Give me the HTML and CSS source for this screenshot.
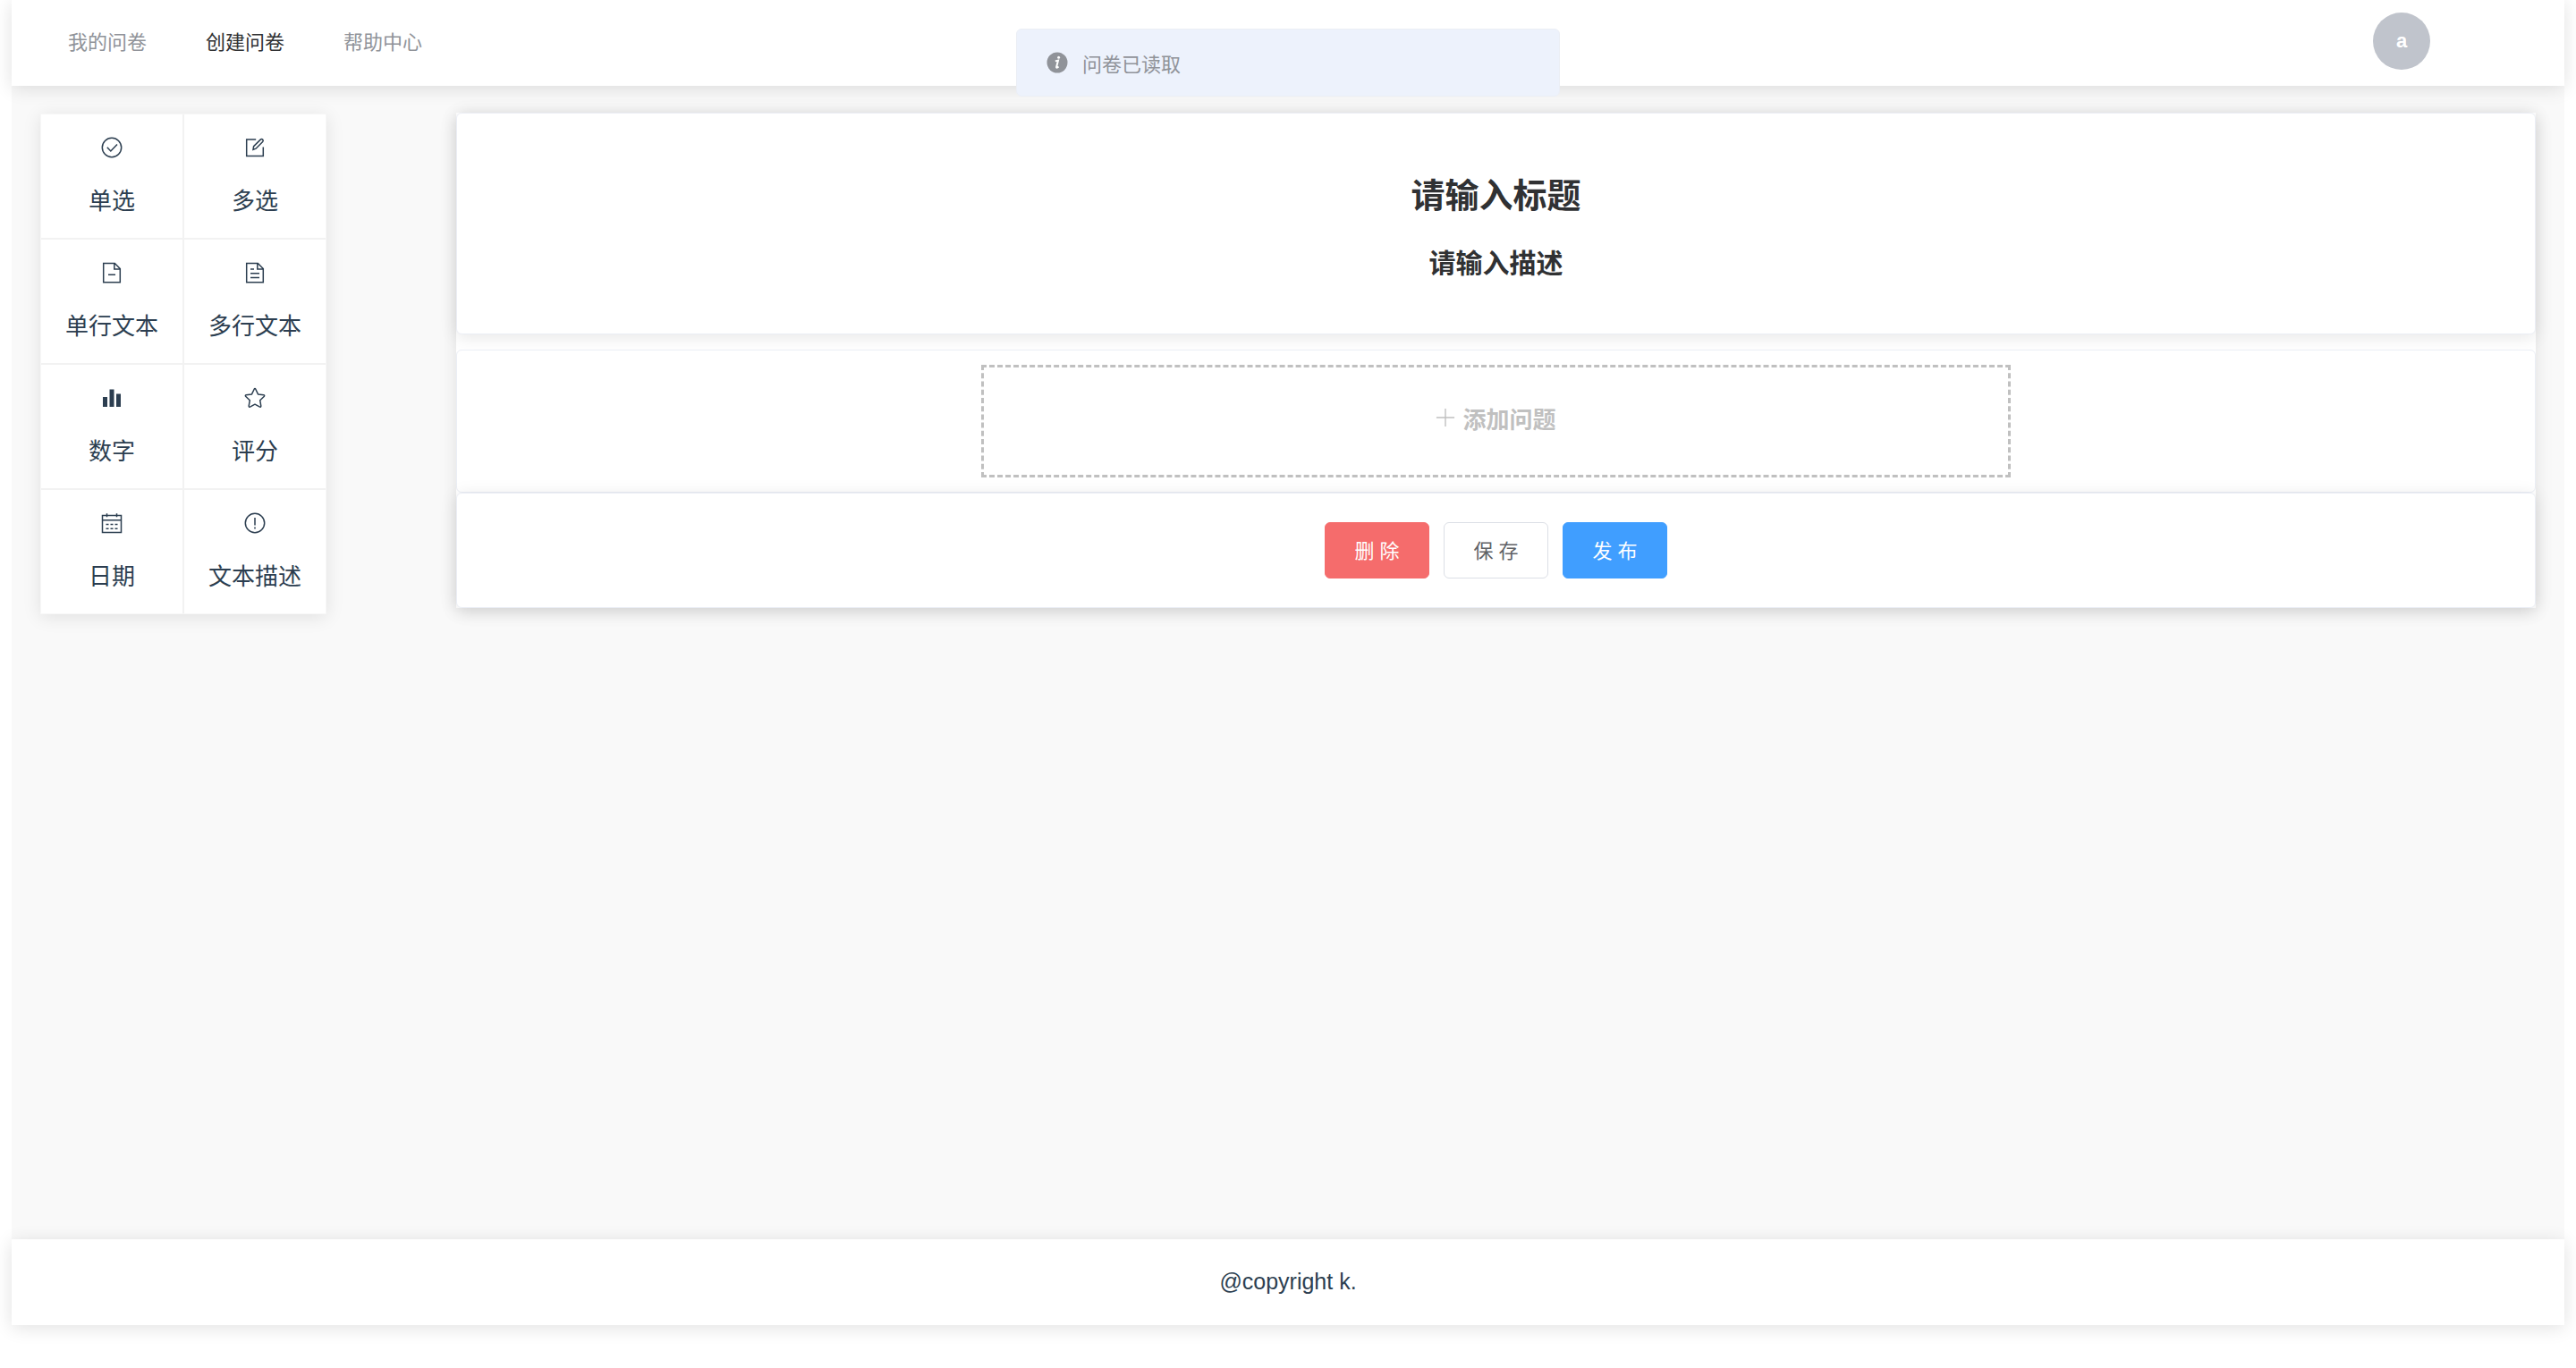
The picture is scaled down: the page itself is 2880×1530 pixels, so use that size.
FILE: index.html
```html
<!DOCTYPE html>
<html lang="zh-CN">
<head>
	<meta charset="UTF-8">
	<meta name="viewport" content="width=device-width, initial-scale=1">
	<title>创建问卷</title>
	<link rel="stylesheet" href="styles.css">
</head>
<body>
	<div class="page">
		<!--顶部导航-->
		<header class="header">
			<nav class="nav">
				<a href="#">我的问卷</a>
				<a href="#" class="active">创建问卷</a>
				<a href="#">帮助中心</a>
			</nav>
			<span class="avatar">a</span>
		</header>

		<main class="main">
			<!--题型-->
			<aside class="aside">
				<div class="types">
					<button type="button" class="type">
						<svg class="icon" viewBox="0 0 26 26"><circle cx="13" cy="13" r="10.7"/><path d="M7.8 12.8l4 4.2 7.2-7.6"/></svg>
						<span>单选</span>
					</button>
					<button type="button" class="type">
						<svg class="icon" viewBox="0 0 26 26"><path d="M14.2 4H3.7v18.6h18.6V12.5"/><path d="M11 15.3l.6-3.6 7.6-7.6q1.3-1 2.5 0 1.1 1.2 0 2.5l-7.6 7.6z"/></svg>
						<span>多选</span>
					</button>
					<button type="button" class="type">
						<svg class="icon" viewBox="0 0 26 26"><path d="M3.7 2.5h12.6l6 6v15.2H3.7zM15.8 2.5V9h6.5M9 15.2h8"/></svg>
						<span>单行文本</span>
					</button>
					<button type="button" class="type">
						<svg class="icon" viewBox="0 0 26 26"><path d="M3.7 2.5h12.6l6 6v15.2H3.7zM15.8 2.5V9h6.5M8 9h4M8 13.8h10M8 18.6h10"/></svg>
						<span>多行文本</span>
					</button>
					<button type="button" class="type">
						<svg class="icon solid" viewBox="0 0 26 26"><path d="M3 12h5v11H3zM10.5 3.5h5V23h-5zM18 8.5h5V23h-5z"/></svg>
						<span>数字</span>
					</button>
					<button type="button" class="type">
						<svg class="icon" viewBox="0 0 26 26"><path stroke-linejoin="round" d="M12.2 3.2q.8-1.2 1.6 0l2.7 5.7 6.4.9q1.2.4.5 1.4l-4.7 4.5 1.1 6.5q-.1 1.3-1.3.9L13 20.2l-5.5 2.9q-1.2.4-1.3-.9l1.1-6.5-4.7-4.5q-.7-1 .5-1.4l6.4-.9z"/></svg>
						<span>评分</span>
					</button>
					<button type="button" class="type">
						<svg class="icon" viewBox="0 0 26 26"><path d="M2.5 4.5h21v19h-21zM2.5 9.8h21M7.5 2.3v4M18.5 2.3v4"/><path stroke-dasharray="3 2" d="M6.5 14.5h13M6.5 19.2h13"/></svg>
						<span>日期</span>
					</button>
					<button type="button" class="type">
						<svg class="icon" viewBox="0 0 26 26"><circle cx="13" cy="13" r="10.7"/><path d="M13 7v8.5M13 17.5v2"/></svg>
						<span>文本描述</span>
					</button>
				</div>
			</aside>

			<!--问卷编辑-->
			<section class="editor">
				<div class="card card-title">
					<h2>请输入标题</h2>
					<h3>请输入描述</h3>
				</div>
				<div class="card card-question">
					<button type="button" class="add">
						<svg class="plus" viewBox="0 0 24 24"><path d="M12 1v22M1 12h22"/></svg>
						<span>添加问题</span>
					</button>
				</div>
				<div class="card card-action">
					<button type="button" class="btn danger">删 除</button>
					<button type="button" class="btn">保 存</button>
					<button type="button" class="btn primary">发 布</button>
				</div>
			</section>
		</main>

		<footer class="footer">@copyright k.</footer>
	</div>

	<!--消息提示-->
	<div class="message" role="alert">
		<svg class="info" viewBox="0 0 24 24"><circle cx="12" cy="12" r="11.5"/><circle class="mark" cx="13.6" cy="6.3" r="1.5"/><path class="stem" d="M9.8 10.4l3.2-.8-1.9 7.3q-.2 1.800 2.400-.4"/></svg>
		<span>问卷已读取</span>
	</div>
</body>
</html>
```

FILE: styles.css
```css
*{
	box-sizing: border-box;
}
body{
	min-height: 100vh;
	margin: 0;
	padding: 0 13px;
	background-color: #fff;
	color: #2c3e50;
	font-family: "Liberation Sans", "Noto Sans CJK SC", sans-serif;
	font-size: 26px;
}
h2,h3{
	margin: 0;
}
button{
	font-family: inherit;
	cursor: pointer;
}
.page{
	display: flex;
	flex-direction: column;
	min-height: calc(100vh - 48px);
}

/* 顶部导航 */
.header{
	position: relative;
	display: flex;
	justify-content: space-between;
	height: 96px;
	padding: 0 150px 0 30px;
	background-color: #fff;
	box-shadow: 0 3px 19px rgba(0,0,0,.12);
}
.nav{
	display: flex;
}
.nav a{
	padding: 0 33px;
	color: #909399;
	font-size: 22px;
	line-height: 96px;
	text-decoration: none;
}
.nav a:hover,
.nav .active{
	color: #303133;
}
.avatar{
	width: 64px;
	height: 64px;
	margin-top: 14px;
	border-radius: 50%;
	background-color: #c0c4cc;
	color: #fff;
	font-size: 22px;
	font-weight: bold;
	line-height: 64px;
	text-align: center;
}

/* 主体 */
.main{
	display: flex;
	flex: 1;
	align-items: flex-start;
	padding: 30px 32px;
	background-color: #f9f9f9;
}
.aside{
	width: 16.6667%;
}
.types{
	display: grid;
	grid-template-columns: 1fr 1fr;
	gap: 2px;
	width: 320px;
	margin-top: 1px;
	border: 1px solid #f7f7f7;
	background-color: #f2f2f2;
	box-shadow: 0 3px 19px rgba(0,0,0,.1);
}
.type{
	display: flex;
	flex-direction: column;
	align-items: center;
	gap: 30px;
	height: 138px;
	padding: 24px 0;
	border: 0;
	background-color: #fff;
	color: #2c3e50;
	font-size: 26px;
	line-height: 34px;
}
.icon{
	width: 26px;
	height: 26px;
	flex: none;
	fill: none;
	stroke: #2c3e50;
	stroke-width: 1.5;
}
.icon.solid{
	fill: #2c3e50;
	stroke: none;
}

/* 问卷编辑 */
.editor{
	flex: 1;
	background-color: #fff;
	box-shadow: 0 3px 19px rgba(0,0,0,.1);
}
.card{
	border: 1px solid #ebeef5;
	border-radius: 6px;
	background-color: #fff;
	text-align: center;
}
.card-title,
.card-action{
	box-shadow: 0 3px 19px rgba(0,0,0,.1);
}
.card-title{
	margin-bottom: 17px;
	padding: 64px 32px 54px;
	color: #303133;
}
.card-title h2{
	margin-bottom: 24px;
	font-size: 38px;
	line-height: 56px;
}
.card-title h3{
	font-size: 30px;
	line-height: 48px;
}
.card-question{
	display: flex;
	justify-content: center;
	padding: 16px 10px;
}
.add{
	display: flex;
	align-items: center;
	justify-content: center;
	gap: 8px;
	width: 50%;
	height: 126px;
	padding: 0 0 8px;
	border: 3px dashed #c0c0c0;
	background-color: transparent;
	color: #c0c0c0;
	font-size: 26px;
	font-weight: bold;
}
.plus{
	width: 22px;
	height: 22px;
	stroke: #c0c0c0;
	stroke-width: 1.5;
}
.card-action{
	display: flex;
	justify-content: center;
	gap: 16px;
	padding: 32px;
}

/* 按钮 */
.btn{
	min-width: 117px;
	height: 63px;
	padding: 0 32px 4px;
	border: 1px solid #dcdfe6;
	border-radius: 6px;
	background-color: #fff;
	color: #606266;
	font-size: 22px;
}
.btn.danger{
	border-color: #f56c6c;
	background-color: #f56c6c;
	color: #fff;
}
.btn.primary{
	border-color: #409eff;
	background-color: #409eff;
	color: #fff;
}

/* 页脚 */
.footer{
	position: relative;
	height: 96px;
	background-color: #fff;
	font-size: 25px;
	line-height: 94px;
	text-align: center;
	box-shadow: 0 3px 19px rgba(0,0,0,.12);
}

/* 消息提示 */
.message{
	position: fixed;
	top: 32px;
	left: 50%;
	z-index: 10;
	display: flex;
	align-items: center;
	gap: 16px;
	width: 608px;
	height: 76px;
	padding: 0 33px;
	border: 1px solid #ebeef5;
	border-radius: 6px;
	background-color: #edf2fc;
	color: #909399;
	font-size: 22px;
	transform: translateX(-50%);
}
.info{
	width: 24px;
	height: 24px;
	fill: #909399;
}
.info .mark{
	fill: #fff;
}
.info .stem{
	fill: none;
	stroke: #fff;
	stroke-width: 2;
}
```
